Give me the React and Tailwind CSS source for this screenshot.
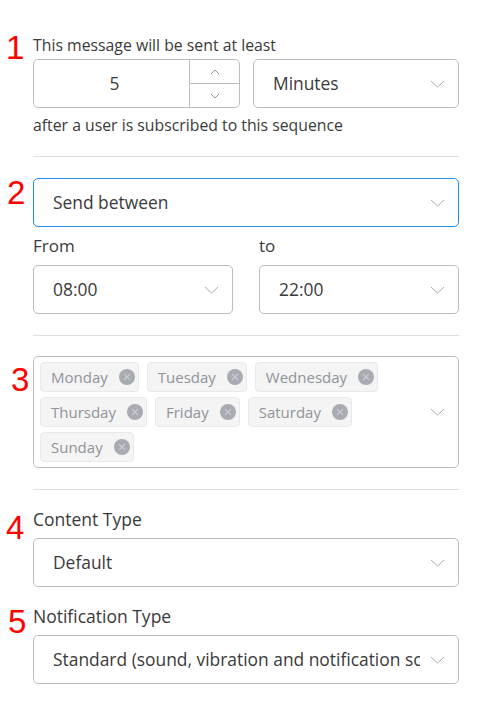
import React from "react";

function Chevron({ className = "" }) {
  return (
    <svg width="15" height="8" viewBox="0 0 15 8" className={className} fill="none">
      <polyline points="1,1 7.5,7 14,1" stroke="#a8abb2" strokeWidth="1" />
    </svg>
  );
}

function Select({ value, blue = false, className = "" }) {
  return (
    <div
      className={`h-[49px] flex items-center rounded-[5px] border bg-white ${
        blue ? "border-[#1f8ef1]" : "border-[#b9bdc6]"
      } ${className}`}
    >
      <div className="flex-1 overflow-hidden whitespace-nowrap pl-[19px] text-[17.4px] text-[#3a3a3a]">
        {value}
      </div>
      <div className="w-[38px] shrink-0 flex justify-start pl-[10px]">
        <Chevron />
      </div>
    </div>
  );
}

function Num({ n, className = "" }) {
  return (
    <div
      className={`w-[33px] shrink-0 text-[33px] leading-none text-[#ff0000] font-['Liberation_Sans',Arial,sans-serif] ${className}`}
    >
      {n}
    </div>
  );
}

function Tag({ label }) {
  return (
    <div className="h-[30px] flex items-center rounded-[4px] border border-[#e9e9eb] bg-[#f4f4f5] pl-[10px] pr-[3px] gap-[11px]">
      <span className="text-[15px] text-[#909399]">{label}</span>
      <span className="w-[16px] h-[16px] rounded-full bg-[#a8abb2] flex items-center justify-center">
        <svg width="8" height="8" viewBox="0 0 8 8">
          <path d="M1 1L7 7M7 1L1 7" stroke="#c9cbd0" strokeWidth="1.2" />
        </svg>
      </span>
    </div>
  );
}

function Divider({ className = "" }) {
  return <div className={`ml-[33px] w-[426px] h-px bg-[#dcdfe6] ${className}`} />;
}

export default function App() {
  const days = ["Monday", "Tuesday", "Wednesday", "Thursday", "Friday", "Saturday", "Sunday"];
  return (
    <div className="w-[490px] h-[715px] bg-white font-['Open_Sans',sans-serif] text-[#333] overflow-hidden">
      {/* Section 1 */}
      <div className="flex pt-[31px]">
        <Num n="1" className="pl-[6px]" />
        <div className="w-[426px]">
          <div className="h-[28px] leading-[28px] text-[15.8px] text-[#3a3a3a]">
            This message will be sent at least
          </div>
          <div className="flex gap-[13px]">
            <div className="w-[207px] h-[49px] flex rounded-[5px] border border-[#b9bdc6]">
              <div className="flex-1 flex items-center justify-center pl-[6px] text-[17.4px] text-[#3a3a3a]">5</div>
              <div className="w-[50px] border-l border-[#b9bdc6] flex flex-col">
                <div className="flex-1 flex items-center justify-center border-b border-[#b9bdc6]">
                  <svg width="10" height="6" viewBox="0 0 10 6" fill="none">
                    <polyline points="1,5 5,1 9,5" stroke="#8d9099" strokeWidth="1" />
                  </svg>
                </div>
                <div className="flex-1 flex items-center justify-center">
                  <svg width="10" height="6" viewBox="0 0 10 6" fill="none">
                    <polyline points="1,1 5,5 9,1" stroke="#8d9099" strokeWidth="1" />
                  </svg>
                </div>
              </div>
            </div>
            <Select value="Minutes" className="w-[206px]" />
          </div>
          <div className="mt-[7px] leading-[20px] text-[15.8px] text-[#3a3a3a]">
            after a user is subscribed to this sequence
          </div>
        </div>
      </div>
      <Divider className="mt-[21px]" />

      {/* Section 2 */}
      <div className="flex mt-[21px]">
        <Num n="2" className="pl-[7px] mt-[-2px]" />
        <div className="w-[426px]">
          <Select value="Send between" blue />
          <div className="grid grid-cols-2 gap-[26px]">
            <div>
              <div className="h-[38px] leading-[38px] text-[17px] text-[#3a3a3a]">From</div>
              <Select value="08:00" />
            </div>
            <div>
              <div className="h-[38px] leading-[38px] text-[17px] text-[#3a3a3a]">to</div>
              <Select value="22:00" />
            </div>
          </div>
        </div>
      </div>
      <Divider className="mt-[21px]" />

      {/* Section 3 */}
      <div className="flex mt-[20px]">
        <Num n="3" className="pl-[11px] mt-[7px]" />
        <div className="w-[426px] rounded-[5px] border border-[#b9bdc6] flex items-center pl-[6px] py-[5px]">
          <div className="flex-1 flex flex-wrap gap-x-[8px] gap-y-[5px]">
            {days.map((d) => (
              <Tag key={d} label={d} />
            ))}
          </div>
          <div className="w-[38px] shrink-0 flex justify-start pl-[10px]">
            <Chevron />
          </div>
        </div>
      </div>
      <Divider className="mt-[21px]" />

      {/* Section 4 */}
      <div className="flex mt-[17px]">
        <Num n="4" className="pl-[6px] mt-[4px]" />
        <div className="w-[426px]">
          <div className="h-[24px] leading-[24px] text-[17.5px] text-[#3a3a3a]">Content Type</div>
          <Select value="Default" className="mt-[7px]" />
        </div>
      </div>

      {/* Section 5 */}
      <div className="flex mt-[17px]">
        <Num n="5" className="pl-[8px] mt-[1px]" />
        <div className="w-[426px]">
          <div className="h-[24px] leading-[24px] text-[17.5px] text-[#3a3a3a]">Notification Type</div>
          <Select value="Standard (sound, vibration and notification screen)" className="mt-[7px]" />
        </div>
      </div>
    </div>
  );
}
